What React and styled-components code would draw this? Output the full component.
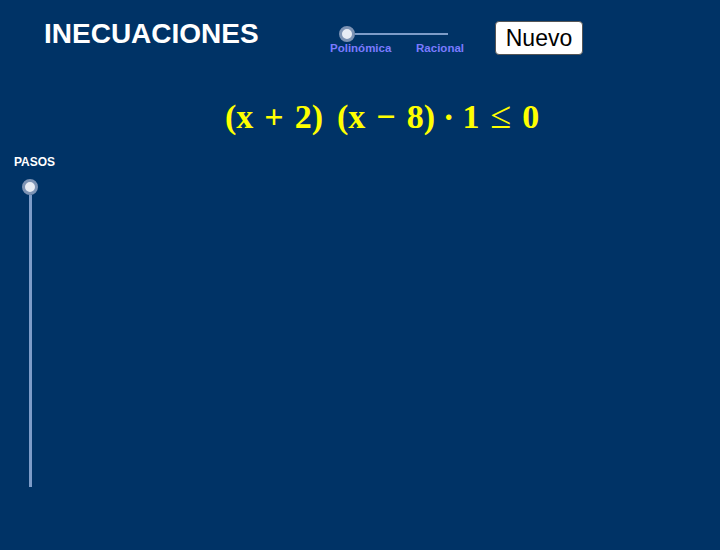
import React from 'react'
import styled, { createGlobalStyle } from 'styled-components'

const GlobalStyle = createGlobalStyle`
    html, body {
        margin: 0;
        padding: 0;
        background: #003366;
    }
`;

const App = () => {
    return (
        <>
            <GlobalStyle />
            <Page>
                <Header>
                    <Title>INECUACIONES</Title>
                    <TypeSlider>
                        <HTrack>
                            <Knob />
                            <HLine />
                        </HTrack>
                        <Labels>
                            <SliderLabel>Polinómica</SliderLabel>
                            <SliderLabel>Racional</SliderLabel>
                        </Labels>
                    </TypeSlider>
                    <NewButton>Nuevo</NewButton>
                </Header>

                <Formula>
                    <Factor>
                        (x<Op>+</Op>2)
                    </Factor>
                    <Factor>
                        (x<Op>−</Op>8)<Op $narrow>·</Op>1<Op $light>≤</Op>0
                    </Factor>
                </Formula>

                <Steps>
                    <StepsLabel>PASOS</StepsLabel>
                    <VTrack>
                        <Knob />
                        <VLine />
                    </VTrack>
                </Steps>
            </Page>
        </>
    )
}

const Page = styled.div`
    width: 720px;
    height: 550px;
    overflow: hidden;
    background: #003366;
    font-family: "Liberation Sans", Arial, sans-serif;
    display: flex;
    flex-direction: column;
`;

const Header = styled.div`
    display: flex;
    align-items: flex-start;
    padding: 17px 0 0 44px;
`;

const Title = styled.h1`
    margin: 0;
    width: 222px;
    font-size: 28px;
    line-height: 34px;
    font-weight: bold;
    color: #ffffff;
`;

const TypeSlider = styled.div`
    display: flex;
    flex-direction: column;
    margin: 9px 0 0 64px;
    width: 134px;
`;

const HTrack = styled.div`
    display: flex;
    align-items: center;
    padding-left: 9px;
`;

const Knob = styled.div`
    width: 10px;
    height: 10px;
    border-radius: 50%;
    background: #e8ecf4;
    border: 3px solid #7d93b4;
    flex-shrink: 0;
    box-sizing: content-box;
`;

const HLine = styled.div`
    width: 93px;
    height: 2px;
    background: #7d9cc8;
`;

const Labels = styled.div`
    display: flex;
    justify-content: space-between;
`;

const SliderLabel = styled.span`
    font-size: 11.5px;
    font-weight: bold;
    color: #7a7aff;
`;

const NewButton = styled.button`
    margin: 4px 0 0 31px;
    width: 88px;
    height: 34px;
    padding: 0;
    background: #ffffff;
    border: 1px solid #555555;
    border-radius: 4px;
    font-family: "Liberation Sans", Arial, sans-serif;
    font-size: 23px;
    color: #000000;
`;

const Formula = styled.div`
    display: flex;
    align-items: baseline;
    gap: 14px;
    height: 40px;
    margin: 40px 0 0 225px;
    font-family: "Liberation Serif", "DejaVu Serif", serif;
    font-weight: bold;
    font-size: 34px;
    line-height: 40px;
    color: #ffff00;
`;

const Factor = styled.span`
    display: flex;
    align-items: baseline;
    white-space: pre;
`;

const Op = styled.span`
    margin: 0 ${(p) => (p.$narrow ? '8px' : '11px')};
    font-weight: ${(p) => (p.$light ? 'normal' : 'bold')};
    font-size: ${(p) => (p.$light ? '38px' : 'inherit')};
`;

const Steps = styled.div`
    display: flex;
    flex-direction: column;
    align-items: flex-start;
    margin: 20px 0 0 14px;
`;

const StepsLabel = styled.span`
    font-size: 12px;
    font-weight: bold;
    color: #ffffff;
    margin-bottom: 10px;
`;

const VTrack = styled.div`
    display: flex;
    flex-direction: column;
    align-items: center;
    margin-left: 8px;
`;

const VLine = styled.div`
    width: 3px;
    height: 292px;
    background: #7d9cc8;
`;

export default App
